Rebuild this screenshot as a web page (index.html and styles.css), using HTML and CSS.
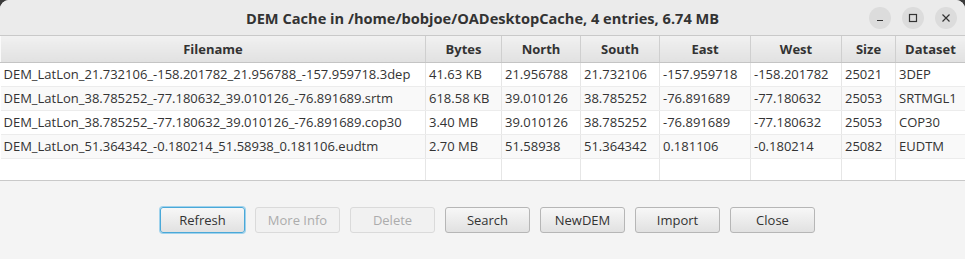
FILE: index.html
```html
<!DOCTYPE html>
<html>
<head>
    <meta charset="utf-8" />
    <title>DEM Cache</title>
    <link rel="stylesheet" href="styles.css">
</head>
<body>
    <div class="window">
        <header class="titlebar">
            <span class="title">DEM Cache in /home/bobjoe/OADesktopCache, 4 entries, 6.74 MB</span>
            <div class="controls">
                <span class="ctl"><svg width="10" height="10" viewBox="0 0 10 10"><path d="M2 7.5h6" stroke="#333" stroke-width="1.2"/></svg></span>
                <span class="ctl"><svg width="10" height="10" viewBox="0 0 10 10"><rect x="1.5" y="1.5" width="7" height="7" fill="none" stroke="#333" stroke-width="1.2"/></svg></span>
                <span class="ctl"><svg width="10" height="10" viewBox="0 0 10 10"><path d="M1.5 1.5l7 7M8.5 1.5l-7 7" stroke="#333" stroke-width="1.2"/></svg></span>
            </div>
        </header>
        <div class="grid">
            <table>
                <colgroup>
                    <col style="width:425px"><col style="width:76px"><col style="width:79px"><col style="width:79px">
                    <col style="width:91px"><col style="width:91px"><col style="width:54px"><col style="width:70px">
                </colgroup>
                <thead>
                    <tr><th>Filename</th><th>Bytes</th><th>North</th><th>South</th><th>East</th><th>West</th><th>Size</th><th>Dataset</th></tr>
                </thead>
                <tbody>
                    <tr><td>DEM_LatLon_21.732106_-158.201782_21.956788_-157.959718.3dep</td><td>41.63 KB</td><td>21.956788</td><td>21.732106</td><td>-157.959718</td><td>-158.201782</td><td>25021</td><td>3DEP</td></tr>
                    <tr><td>DEM_LatLon_38.785252_-77.180632_39.010126_-76.891689.srtm</td><td>618.58 KB</td><td>39.010126</td><td>38.785252</td><td>-76.891689</td><td>-77.180632</td><td>25053</td><td>SRTMGL1</td></tr>
                    <tr><td>DEM_LatLon_38.785252_-77.180632_39.010126_-76.891689.cop30</td><td>3.40 MB</td><td>39.010126</td><td>38.785252</td><td>-76.891689</td><td>-77.180632</td><td>25053</td><td>COP30</td></tr>
                    <tr><td>DEM_LatLon_51.364342_-0.180214_51.58938_0.181106.eudtm</td><td>2.70 MB</td><td>51.58938</td><td>51.364342</td><td>0.181106</td><td>-0.180214</td><td>25082</td><td>EUDTM</td></tr>
                    <tr class="empty"><td></td><td></td><td></td><td></td><td></td><td></td><td></td><td></td></tr>
                </tbody>
            </table>
        </div>
        <div class="buttons">
            <button class="btn focus">Refresh</button>
            <button class="btn" disabled>More Info</button>
            <button class="btn" disabled>Delete</button>
            <button class="btn">Search</button>
            <button class="btn">NewDEM</button>
            <button class="btn">Import</button>
            <button class="btn">Close</button>
        </div>
    </div>
</body>
</html>
```
FILE: styles.css
```css
* {padding: 0;margin: 0;box-sizing: border-box;}
body {background: #3a3a3a;font-family: "Open Sans", "Noto Sans", sans-serif;color: #333;width: 965px;height: 259px;overflow: hidden;}
.window {background: #f4f4f4;height: 259px;border-radius: 9px 9px 0 0;overflow: hidden;}

.titlebar {height: 36px;background: #ebebeb;border-bottom: 1px solid #c9c9c9;display: flex;align-items: center;justify-content: center;position: relative;}
.title {font-size: 14.6px;font-weight: bold;color: #333;padding-top: 1px;}
.controls {position: absolute;right: 8px;top: 7px;display: flex;gap: 11px;}
.ctl {width: 22px;height: 22px;border-radius: 50%;background: #dcdcdc;display: flex;align-items: center;justify-content: center;}

.grid {height: 145px;background: #fff;border-bottom: 1px solid #c9c9c9;}
table {table-layout: fixed;border-collapse: collapse;width: 965px;font-size: 13px;}
th {height: 26px;font-weight: bold;background: linear-gradient(#f1f1f1, #e1e1e1);border-right: 1px solid #cfcfcf;border-left: 1px solid #fafafa;border-bottom: 1px solid #c4c4c4;color: #333;}
td {height: 24px;padding: 0 3px;white-space: nowrap;overflow: hidden;border-right: 1px solid #e6e6e6;border-bottom: 1px solid #ececec;color: #333;}
tbody tr:nth-child(even) td {background: #f9f9f9;}
tr.empty td {height: 22px;border-bottom: none;background: #fff;}

.buttons {display: flex;justify-content: center;gap: 10px;padding: 26px 0 0 10px;}
.btn {width: 85px;height: 26px;font-family: inherit;font-size: 13px;color: #333;border: 1px solid #b6b6b6;border-radius: 3px;background: linear-gradient(#f7f7f7, #e1e1e1);}
.btn:disabled {color: #acacac;border-color: #dadada;background: #f1f1f1;}
.btn.focus {border: 1px solid #4aa8d8;box-shadow: 0 0 0 1px #9fd2ec;}
```
